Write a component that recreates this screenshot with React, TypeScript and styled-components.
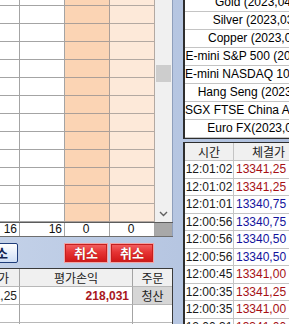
import styled, { createGlobalStyle } from "styled-components";

const GlobalStyle = createGlobalStyle`
    html, body {
        margin: 0;
        padding: 0;
        background: #b9c8e2;
    }
    body {
        font-family: "Liberation Sans", "Noto Sans CJK KR", sans-serif;
        font-size: 12px;
        color: #111;
    }
`;

const Screen = styled.div`
    width: 289px;
    height: 324px;
    overflow: hidden;
    display: flex;
    background: linear-gradient(to right, #c3d1e8, #aebfdd);
`;

/* ---------- left side ---------- */

const LeftPane = styled.div`
    width: 173px;
    flex: none;
    display: flex;
    flex-direction: column;
    min-height: 0;
`;

const GridArea = styled.div`
    flex: none;
    display: flex;
    height: 222px;
    background: #fff;
`;

const GridBody = styled.div`
    width: 155px;
    overflow: hidden;
`;

const GridRows = styled.div`
    margin-top: -12px;
`;

const GridRow = styled.div`
    display: grid;
    grid-template-columns: 20px 45px 45px 45px;
    height: 18px;
`;

type Tone = "white" | "orange" | "peach";

const toneBg: Record<Tone, string> = {
    white: "#ffffff",
    orange: "#fbd4b4",
    peach: "#fde9d9",
};

const toneLine: Record<Tone, string> = {
    white: "#a4a4a4",
    orange: "#ab9f98",
    peach: "#b3a9a2",
};

const GridCell = styled.div<{ $tone: Tone }>`
    background: ${(p) => toneBg[p.$tone]};
    border-right: 1px solid ${(p) => toneLine[p.$tone]};
    border-bottom: 1px solid ${(p) => toneLine[p.$tone]};
`;

const Scrollbar = styled.div`
    width: 17px;
    background: #f0f0f0;
    border-right: 1px solid #8f9fbb;
    display: flex;
    flex-direction: column;
    align-items: center;
`;

const Thumb = styled.div`
    margin-top: 65px;
    width: 15px;
    height: 17px;
    background: #cdcdcd;
`;

const ArrowDown = styled.div`
    margin-top: auto;
    height: 17px;
    display: flex;
    align-items: center;
    justify-content: center;
    color: #606060;
`;

const TotalRow = styled.div`
    flex: none;
    display: grid;
    grid-template-columns: 20px 45px 45px 45px 18px;
    height: 15px;
    background: #fff;
    border-top: 1px solid #5c5c5c;
    border-bottom: 1px solid #6e6e6e;
    box-sizing: border-box;
`;

const TotalCell = styled.div<{ $align: "right" | "center" }>`
    border-right: 1px solid #a4a4a4;
    text-align: ${(p) => p.$align};
    line-height: 13px;
    padding: 0 2px 0 0;
    overflow: hidden;
    white-space: nowrap;
`;

const TotalPad = styled.div`
    background: #a8a8a8;
    border-right: 1px solid #8f9fbb;
`;

const ButtonBand = styled.div`
    flex: none;
    height: 31px;
    padding-top: 6px;
    box-sizing: border-box;
    display: flex;
    align-items: flex-start;
`;

const BlueButton = styled.button`
    margin-left: -26px;
    width: 44px;
    height: 20px;
    padding: 0;
    border: 1px solid #1f3d7a;
    border-radius: 2px;
    background: linear-gradient(#ffffff, #cfdef5);
    color: #12224e;
    font-family: "Noto Sans CJK KR", sans-serif;
    font-size: 13px;
    font-weight: bold;
    line-height: 18px;
`;

const RedGroup = styled.div`
    margin-left: auto;
    margin-right: 19px;
    display: flex;
    gap: 2px;
`;

const RedButton = styled.button`
    width: 44px;
    height: 20px;
    padding: 0;
    border: 1px solid #f3a3a3;
    outline: 1px solid #c42020;
    outline-offset: -2px;
    background: linear-gradient(#f46464 0%, #e63434 45%, #d01616 100%);
    color: #fff;
    font-family: "Noto Sans CJK KR", sans-serif;
    font-size: 13px;
    font-weight: bold;
    line-height: 18px;
    text-shadow: 0 0 1px #8a0000;
`;

const BottomTable = styled.div`
    flex: 1;
    min-height: 0;
    overflow: hidden;
    background: #fff;
    border-top: 1px solid #3a3a3a;
    border-right: 1px solid #3a3a3a;
`;

const BRow = styled.div<{ $head?: boolean }>`
    display: grid;
    grid-template-columns: 20px 113px 39px;
    height: 18px;
    background: ${(p) => (p.$head ? "#f0f0f0" : "#fff")};
    font-family: "Noto Sans CJK KR", "Liberation Sans", sans-serif;
`;

const BCell = styled.div<{ $align: "end" | "center"; $shade?: boolean; $last?: boolean; $pad?: number }>`
    display: flex;
    align-items: center;
    justify-content: ${(p) => (p.$align === "end" ? "flex-end" : "center")};
    padding-right: ${(p) => (p.$pad ?? (p.$align === "end" ? 3 : 0))}px;
    background: ${(p) => (p.$shade ? "#d6d6d6" : "transparent")};
    border-right: ${(p) => (p.$last ? "none" : "1px solid #a4a4a4")};
    border-bottom: 1px solid #b8b8b8;
    overflow: hidden;
    white-space: nowrap;
    color: #222;
`;

const ProfitText = styled.span`
    font-family: "Liberation Sans", sans-serif;
    font-weight: bold;
    color: #a8161c;
`;

const NumText = styled.span`
    font-family: "Liberation Sans", sans-serif;
`;

/* ---------- right side ---------- */

const RightPane = styled.div`
    margin-left: 10px;
    width: 200px;
    flex: none;
    display: flex;
    flex-direction: column;
    gap: 3px;
`;

const ListBox = styled.div`
    flex: none;
    height: 139px;
    box-sizing: border-box;
    background: #fff;
    border-left: 2px solid #2e2e2e;
    border-bottom: 1px solid #2e2e2e;
    overflow: hidden;
`;

const ListRows = styled.div`
    margin-top: -6px;
`;

const ListRow = styled.div`
    width: 140px;
    height: 18px;
    box-sizing: border-box;
    border-bottom: 1px solid #c4c4c4;
    text-align: center;
    white-space: nowrap;
    line-height: 17px;
    color: #000;
`;

const TradeBox = styled.div`
    flex: 1;
    min-height: 0;
    background: #fff;
    border-left: 2px solid #2e2e2e;
    border-top: 1px solid #2e2e2e;
    overflow: hidden;
`;

const TradeRow = styled.div<{ $head?: boolean }>`
    display: grid;
    grid-template-columns: 49px 70px;
    height: ${(p) => (p.$head ? "18px" : "17.5px")};
    background: ${(p) => (p.$head ? "#f0f0f0" : "#fff")};
    font-family: ${(p) => (p.$head ? `"Noto Sans CJK KR", sans-serif` : `"Liberation Sans", sans-serif`)};
`;

const TradeCell = styled.div<{ $color?: string; $price?: boolean }>`
    display: flex;
    align-items: center;
    justify-content: ${(p) => (p.$price ? "flex-start" : "center")};
    padding-left: ${(p) => (p.$price ? "2px" : "0")};
    border-right: 1px solid #c4c4c4;
    border-bottom: 1px solid #c4c4c4;
    color: ${(p) => p.$color ?? "#1a1a1a"};
    white-space: nowrap;
    overflow: hidden;
`;

const names = [
    "Gold (2023,04)",
    "Silver (2023,03)",
    "Copper (2023,03)",
    "E-mini S&P 500 (2023,03)",
    "E-mini NASDAQ 100 (2023,03)",
    "Hang Seng (2023,02)",
    "SGX FTSE China A50 (2023,02)",
    "Euro FX(2023,03)",
];

const UP = "#a50f14";
const DOWN = "#12129c";

const trades = [
    { time: "12:01:02", price: "13341,25", color: UP },
    { time: "12:01:02", price: "13341,25", color: UP },
    { time: "12:01:01", price: "13340,75", color: DOWN },
    { time: "12:00:56", price: "13340,75", color: DOWN },
    { time: "12:00:56", price: "13340,50", color: DOWN },
    { time: "12:00:56", price: "13340,50", color: DOWN },
    { time: "12:00:45", price: "13341,00", color: UP },
    { time: "12:00:35", price: "13341,25", color: UP },
    { time: "12:00:35", price: "13341,00", color: UP },
    { time: "12:00:31", price: "13341,00", color: UP },
];

const tones: Tone[] = ["white", "white", "orange", "peach"];

export default function App() {
    return (
        <>
            <GlobalStyle />
            <Screen>
                <LeftPane>
                    <GridArea>
                        <GridBody>
                            <GridRows>
                                {Array.from({ length: 13 }).map((_, r) => (
                                    <GridRow key={r}>
                                        {tones.map((t, c) => (
                                            <GridCell key={c} $tone={t} />
                                        ))}
                                    </GridRow>
                                ))}
                            </GridRows>
                        </GridBody>
                        <Scrollbar>
                            <Thumb />
                            <ArrowDown>
                                <svg width="9" height="6" viewBox="0 0 9 6">
                                    <polyline points="1,1 4.5,4.5 8,1" fill="none" stroke="currentColor" strokeWidth="1.4" />
                                </svg>
                            </ArrowDown>
                        </Scrollbar>
                    </GridArea>
                    <TotalRow>
                        <TotalCell $align="right">16</TotalCell>
                        <TotalCell $align="right">16</TotalCell>
                        <TotalCell $align="center">0</TotalCell>
                        <TotalCell $align="center">0</TotalCell>
                        <TotalPad />
                    </TotalRow>
                    <ButtonBand>
                        <BlueButton>취소</BlueButton>
                        <RedGroup>
                            <RedButton>취소</RedButton>
                            <RedButton>취소</RedButton>
                        </RedGroup>
                    </ButtonBand>
                    <BottomTable>
                        <BRow $head>
                            <BCell $align="end" $pad={10}>평균가</BCell>
                            <BCell $align="center">평가손익</BCell>
                            <BCell $align="center" $last>주문</BCell>
                        </BRow>
                        <BRow>
                            <BCell $align="end" $pad={2}><NumText>13341,25</NumText></BCell>
                            <BCell $align="end"><ProfitText>218,031</ProfitText></BCell>
                            <BCell $align="center" $shade $last>청산</BCell>
                        </BRow>
                        <BRow>
                            <BCell $align="end" />
                            <BCell $align="end" />
                            <BCell $align="center" $last />
                        </BRow>
                        <BRow>
                            <BCell $align="end" />
                            <BCell $align="end" />
                            <BCell $align="center" $last />
                        </BRow>
                    </BottomTable>
                </LeftPane>
                <RightPane>
                    <ListBox>
                        <ListRows>
                            {names.map((n) => (
                                <ListRow key={n}>{n}</ListRow>
                            ))}
                        </ListRows>
                    </ListBox>
                    <TradeBox>
                        <TradeRow $head>
                            <TradeCell>시간</TradeCell>
                            <TradeCell>체결가</TradeCell>
                        </TradeRow>
                        {trades.map((t, i) => (
                            <TradeRow key={i}>
                                <TradeCell>{t.time}</TradeCell>
                                <TradeCell $price $color={t.color}>{t.price}</TradeCell>
                            </TradeRow>
                        ))}
                    </TradeBox>
                </RightPane>
            </Screen>
        </>
    );
}
